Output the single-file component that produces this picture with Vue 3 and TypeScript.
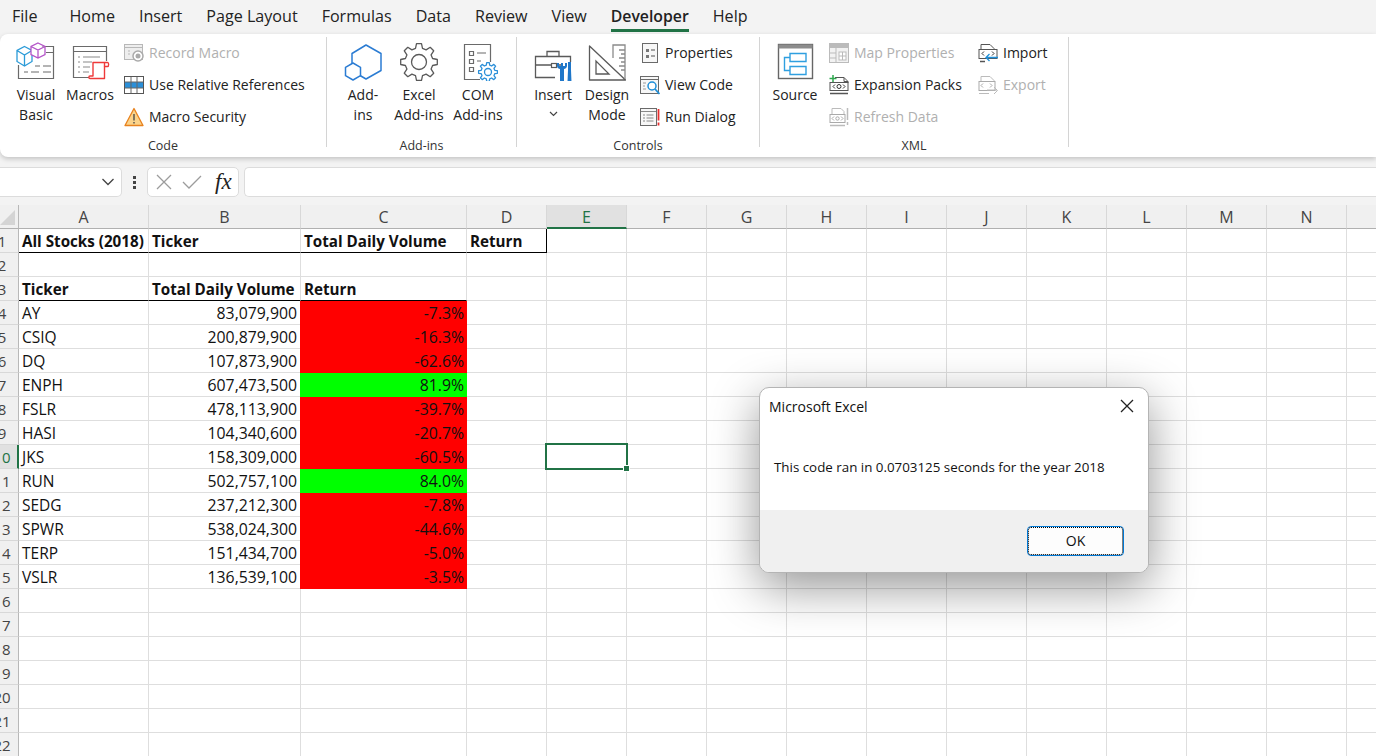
<script setup lang="ts">
interface Stock { t: string; v: string; r: string; up: boolean }

const tabs = ['Home', 'Insert', 'Page Layout', 'Formulas', 'Data', 'Review', 'View', 'Developer', 'Help']
const cols = ['A', 'B', 'C', 'D', 'E', 'F', 'G', 'H', 'I', 'J', 'K', 'L', 'M', 'N', '']

const stocks: Stock[] = [
  { t: 'AY', v: '83,079,900', r: '-7.3%', up: false },
  { t: 'CSIQ', v: '200,879,900', r: '-16.3%', up: false },
  { t: 'DQ', v: '107,873,900', r: '-62.6%', up: false },
  { t: 'ENPH', v: '607,473,500', r: '81.9%', up: true },
  { t: 'FSLR', v: '478,113,900', r: '-39.7%', up: false },
  { t: 'HASI', v: '104,340,600', r: '-20.7%', up: false },
  { t: 'JKS', v: '158,309,000', r: '-60.5%', up: false },
  { t: 'RUN', v: '502,757,100', r: '84.0%', up: true },
  { t: 'SEDG', v: '237,212,300', r: '-7.8%', up: false },
  { t: 'SPWR', v: '538,024,300', r: '-44.6%', up: false },
  { t: 'TERP', v: '151,434,700', r: '-5.0%', up: false },
  { t: 'VSLR', v: '136,539,100', r: '-3.5%', up: false },
]

const rowNums = Array.from({ length: 22 }, (_, i) => i + 1)

// 齿轮图标的路径
function gear(cx: number, cy: number, r1: number, r2: number, n: number) {
  const pts: string[] = []
  const step = (Math.PI * 2) / n
  for (let i = 0; i < n; i++) {
    const a = i * step - Math.PI / 2
    const p = (r: number, d: number) => {
      const x = cx + r * Math.cos(a + d * step)
      const y = cy + r * Math.sin(a + d * step)
      return x.toFixed(1) + ' ' + y.toFixed(1)
    }
    pts.push(p(r1, -0.32), p(r2, -0.17), p(r2, 0.17), p(r1, 0.32))
  }
  return 'M' + pts.join('L') + 'Z'
}

function cellClass(row: number, col: number) {
  const c: string[] = []
  if (row === 1 && col < 4) c.push('under')
  if (row === 1 && col === 3) c.push('edge')
  if (row === 3 && col < 3) c.push('under')
  if (col === 2 && row >= 4 && row <= 15) c.push(stocks[row - 4].up ? 'up' : 'down')
  if (row === 10 && col === 4) c.push('active')
  return c
}

function cellText(row: number, col: number) {
  if (row === 1) return ['All Stocks (2018)', 'Ticker', 'Total Daily Volume', 'Return'][col] ?? ''
  if (row === 3) return ['Ticker', 'Total Daily Volume', 'Return'][col] ?? ''
  if (row >= 4 && row <= 15) {
    const s = stocks[row - 4]
    return [s.t, s.v, s.r][col] ?? ''
  }
  return ''
}
</script>

<template>
  <div class="app">
    <div class="tabs">
      <span class="tab file">File</span>
      <span v-for="t in tabs" :key="t" class="tab" :class="{ on: t === 'Developer' }">{{ t }}</span>
    </div>

    <div class="ribbon">
      <!-- Code -->
      <div class="group" style="width: 326px">
        <div class="content pad-code">
          <div class="big" style="width: 56px">
            <svg width="40" height="40" viewBox="0 0 40 40" fill="none">
              <path d="M26 5.500h11.500v32H2.500V24" stroke="#6a6a6a" stroke-width="1.200" />
              <path d="M30 11.500h7M19 25h5M27 25h8M8 31h4M15 31h8M27 31h8" stroke="#6a6a6a" stroke-width="1.200" />
              <path d="M8.500 5.500L16 9.500v11L8.500 25 1 20.500v-11z M1 9.500l7.500 4.500 7.500-4.500M8.500 14v11" stroke="#2b9bd8" stroke-width="1.300" fill="#fff" />
              <path d="M22 2l7 3.500v8l-7 3.500-7-3.500v-8z M15 5.500L22 9l7-3.500M22 9v8" stroke="#b455c8" stroke-width="1.300" fill="#fff" />
            </svg>
            <span class="lbl">Visual<br />Basic</span>
          </div>
          <div class="big" style="width: 52px">
            <svg width="40" height="40" viewBox="0 0 40 40" fill="none">
              <path d="M19 36.500H3.500v-31h33V20" stroke="#6a6a6a" stroke-width="1.200" />
              <path d="M3.500 10.500h33" stroke="#6a6a6a" stroke-width="1.200" />
              <path d="M8 16h2M13 16h17M8 21h2M13 21h9M8 26h2M13 26h7M8 31h2M13 31h6" stroke="#8a8a8a" stroke-width="1.200" />
              <path d="M23 21.500h14.500c1.500 0 1.500 4 0 4H34.500v12H20c-1.500 0-1.500-2.500 0-2.500h3z" stroke="#ee3a3a" stroke-width="1.400" fill="#fff" stroke-linejoin="round" />
              <path d="M34.500 21.500v4" stroke="#ee3a3a" stroke-width="1.400" />
            </svg>
            <span class="lbl">Macros</span>
          </div>
          <div class="stack" style="margin-left: 8px">
            <div class="small off">
              <svg width="20" height="20" viewBox="0 0 20 20" fill="none">
                <rect x="0.500" y="1.500" width="18" height="15" fill="#eee" stroke="#b8b8b8" />
                <path d="M1 4.500h18M4 8h2M4 11h2" stroke="#b8b8b8" />
                <circle cx="14" cy="13" r="5" fill="#fff" stroke="#aaa" stroke-width="1.500" />
                <circle cx="14" cy="13" r="2.500" fill="#aaa" />
              </svg>
              Record Macro
            </div>
            <div class="small">
              <svg width="20" height="20" viewBox="0 0 20 20" fill="none">
                <rect x="0.500" y="7" width="19" height="6" fill="#2b8fd8" />
                <rect x="0.500" y="1.500" width="19" height="17" stroke="#555" />
                <path d="M7 2v16M13 2v16M1 7h18M1 13h18" stroke="#666" />
              </svg>
              Use Relative References
            </div>
            <div class="small">
              <svg width="20" height="20" viewBox="0 0 20 20" fill="none">
                <path d="M10 1.500L19 18.500H1z" fill="#fbd38a" stroke="#e8821e" stroke-width="1.300" stroke-linejoin="round" />
                <path d="M10 7v6.500M10 15v1.500" stroke="#444" stroke-width="1.300" />
              </svg>
              Macro Security
            </div>
          </div>
        </div>
        <div class="gname">Code</div>
      </div>
      <div class="sep"></div>

      <!-- Add-ins -->
      <div class="group" style="width: 189px">
        <div class="content pad-add">
          <div class="big" style="width: 56px">
            <svg width="40" height="40" viewBox="0 0 40 40" fill="none">
              <path d="M23 4l15 8.500v17L23 38l-12-7V24l-2-1V12.500z" stroke="#2b7cd3" stroke-width="1.500" stroke-linejoin="round" />
              <path d="M10 22l7.500 4.300v8.400L10 39l-7.500-4.300v-8.400z" stroke="#2b7cd3" stroke-width="1.500" fill="#fff" stroke-linejoin="round" />
            </svg>
            <span class="lbl">Add-<br />ins</span>
          </div>
          <div class="big" style="width: 56px">
            <svg width="40" height="40" viewBox="0 0 40 40" fill="none">
              <path :d="gear(20, 21, 14, 18.500, 8)" stroke="#5a5a5a" stroke-width="1.300" stroke-linejoin="round" />
              <circle cx="20" cy="21" r="7.500" stroke="#5a5a5a" stroke-width="1.300" />
            </svg>
            <span class="lbl">Excel<br />Add-ins</span>
          </div>
          <div class="big" style="width: 62px">
            <svg width="40" height="40" viewBox="0 0 40 40" fill="none">
              <path d="M22 38.500H6.500v-35h26V21" stroke="#6a6a6a" stroke-width="1.200" />
              <path d="M11.500 10.500h4v4h-4zM11.500 18.500h4v4h-4zM11.500 26.500h4v4h-4zM19 12h9M19 20h4" stroke="#6a6a6a" stroke-width="1.200" />
              <path :d="gear(30, 31, 7, 9.500, 8)" stroke="#2b8fd8" stroke-width="1.300" fill="#fff" stroke-linejoin="round" />
              <circle cx="30" cy="31" r="3.500" stroke="#2b8fd8" stroke-width="1.300" />
            </svg>
            <span class="lbl">COM<br />Add-ins</span>
          </div>
        </div>
        <div class="gname">Add-ins</div>
      </div>
      <div class="sep"></div>

      <!-- Controls -->
      <div class="group" style="width: 242px">
        <div class="content pad-ctl">
          <div class="big" style="width: 52px">
            <svg width="40" height="40" viewBox="0 0 40 40" fill="none">
              <path d="M22 36.500H2.500V15.500h35V21" stroke="#5a5a5a" stroke-width="1.300" />
              <path d="M14 15V10.500h12V15M3 24h15M24 24h4" stroke="#5a5a5a" stroke-width="1.300" />
              <rect x="18.500" y="22.500" width="5" height="4" stroke="#5a5a5a" stroke-width="1.200" />
              <path d="M24 22v3c0 2 2 3 3 3v13h4V28c1 0 3-1 3-3v-3h-2v3h-2v-3h-2v3h-2v-3z" fill="#1f77c9" />
              <path d="M35 21h3v8h-3zM35 29h3l.5 12h-4z" fill="#1f77c9" />
            </svg>
            <span class="lbl">Insert<br /><svg class="caret" width="9" height="6" viewBox="0 0 9 6" fill="none"><path d="M1 1l3.500 3.500L8 1" stroke="#444" stroke-width="1.200" /></svg></span>
          </div>
          <div class="big" style="width: 56px">
            <svg width="40" height="40" viewBox="0 0 40 40" fill="none">
              <path d="M2.500 5v34h36z" stroke="#5a5a5a" stroke-width="1.300" stroke-linejoin="round" />
              <path d="M9 20v13h13z" stroke="#5a5a5a" stroke-width="1.300" />
              <path d="M26 17V4h12v34M32 9h6M34 13h4M32 17h6M34 21h4M32 25h6M34 29h4" stroke="#8a8a8a" stroke-width="1.300" />
            </svg>
            <span class="lbl">Design<br />Mode</span>
          </div>
          <div class="stack" style="margin-left: 5px">
            <div class="small">
              <svg width="20" height="20" viewBox="0 0 20 20" fill="none">
                <rect x="2.500" y="0.500" width="15" height="19" fill="#f7f7f7" stroke="#6a6a6a" />
                <path d="M6 6h3v3H6zM6 12h3v3H6z" fill="#777" />
                <path d="M11 7h4M11 13h4" stroke="#888" stroke-width="1.500" />
              </svg>
              Properties
            </div>
            <div class="small">
              <svg width="20" height="20" viewBox="0 0 20 20" fill="none">
                <rect x="0.500" y="1.500" width="18" height="17" fill="#f7f7f7" stroke="#6a6a6a" />
                <path d="M1 4.500h18" stroke="#6a6a6a" />
                <path d="M3 8h3M3 11h2M3 14h3" stroke="#999" />
                <circle cx="12" cy="11" r="4" fill="#fff" stroke="#1f8fd8" stroke-width="1.500" />
                <path d="M15 14l4.500 5" stroke="#1f8fd8" stroke-width="1.800" />
              </svg>
              View Code
            </div>
            <div class="small">
              <svg width="20" height="20" viewBox="0 0 20 20" fill="none">
                <rect x="0.500" y="1.500" width="16" height="17" fill="#f7f7f7" stroke="#6a6a6a" />
                <path d="M1 4.500h15M3 8h2M6.500 8h7M3 11h2M6.500 11h7M3 14h2M6.500 14h7" stroke="#888" />
                <path d="M18.500 2v11.500M18.500 15.500v3" stroke="#e83030" stroke-width="1.800" />
              </svg>
              Run Dialog
            </div>
          </div>
        </div>
        <div class="gname">Controls</div>
      </div>
      <div class="sep"></div>

      <!-- XML -->
      <div class="group" style="width: 308px">
        <div class="content pad-xml">
          <div class="big" style="width: 50px">
            <svg width="40" height="40" viewBox="0 0 40 40" fill="none">
              <rect x="3.500" y="3.500" width="34" height="34" fill="#fff" stroke="#666" stroke-width="1.400" />
              <rect x="3.500" y="3.500" width="34" height="4" fill="#8c8c8c" />
              <path d="M15 12.500h16v8H15zM15 25.500h16v8H15zM15 16.500H9.500v13H15" stroke="#2f9fe0" stroke-width="1.400" />
            </svg>
            <span class="lbl">Source</span>
          </div>
          <div class="stack" style="margin-left: 9px; width: 149px">
            <div class="small off">
              <svg width="20" height="20" viewBox="0 0 20 20" fill="none">
                <rect x="0.500" y="0.500" width="19" height="19" fill="#f2f2f2" stroke="#bbb" />
                <rect x="1" y="1" width="18" height="4" fill="#bbb" />
                <path d="M7 5v14M1 10h6M1 15h6" stroke="#bbb" />
                <rect x="10" y="9" width="7" height="8" fill="#fff" stroke="#bbb" />
                <path d="M13.500 9v8M10 13h7" stroke="#bbb" />
              </svg>
              Map Properties
            </div>
            <div class="small">
              <svg width="20" height="20" viewBox="0 0 20 20" fill="none">
                <path d="M6 2.500h9l4 4V8M2 8V7" stroke="#555" />
                <path d="M15 2.500v4h4" stroke="#555" />
                <rect x="1" y="7.500" width="18" height="8" fill="#fff" stroke="#555" />
                <path d="M6 9.500L4 11.500l2 2M14 9.500l2 2-2 2" stroke="#333" />
                <circle cx="10" cy="11.500" r="2" stroke="#333" />
                <path d="M1 18.500h18" stroke="#555" stroke-width="1.500" />
                <path d="M4 0v7M.5 3.500h7" stroke="#2fa84f" stroke-width="1.500" />
              </svg>
              Expansion Packs
            </div>
            <div class="small off">
              <svg width="20" height="20" viewBox="0 0 20 20" fill="none">
                <path d="M3 7V1.500h9l3 3V7" stroke="#bbb" />
                <rect x="1" y="7.500" width="15" height="8" fill="#fff" stroke="#aaa" />
                <path d="M5 9.500l-2 2 2 2M12 9.500l2 2-2 2" stroke="#aaa" />
                <circle cx="8.500" cy="11.500" r="1.700" stroke="#aaa" />
                <path d="M1 18.500h15" stroke="#bbb" stroke-width="1.500" />
                <path d="M18.500 1v12M18.500 15v3" stroke="#bbb" stroke-width="1.500" />
              </svg>
              Refresh Data
            </div>
          </div>
          <div class="stack">
            <div class="small">
              <svg width="20" height="20" viewBox="0 0 20 20" fill="none">
                <path d="M3 7V1.500h9l4 4V7" stroke="#555" />
                <rect x="1" y="6.500" width="18" height="9" fill="#fff" stroke="#555" />
                <path d="M6 8.500l-2 2 2 2M14 8.500l2 2-2 2" stroke="#333" />
                <path d="M2 18.500h5" stroke="#555" stroke-width="1.500" />
                <path d="M20 14.500H8M11.500 11l-3.500 3.500 3.500 3.500" stroke="#1f8fd8" stroke-width="1.300" />
              </svg>
              Import
            </div>
            <div class="small off">
              <svg width="20" height="20" viewBox="0 0 20 20" fill="none">
                <path d="M3 7V1.500h9l4 4V7" stroke="#bbb" />
                <rect x="1" y="6.500" width="16" height="9" fill="#fff" stroke="#aaa" />
                <path d="M5 8.500l-2 2 2 2M12 8.500l2 2-2 2" stroke="#aaa" />
                <path d="M1 18.500h10M9 15h10M16 12l3.500 3.500-3.500 3.500" stroke="#bbb" />
              </svg>
              Export
            </div>
          </div>
        </div>
        <div class="gname">XML</div>
      </div>
      <div class="sep"></div>
    </div>

    <div class="fbar">
      <div class="namebox">
        <svg width="14" height="8" viewBox="0 0 14 8" fill="none"><path d="M1.500 1l5.500 5.500L12.500 1" stroke="#444" stroke-width="1.300" /></svg>
      </div>
      <div class="dots"><i></i><i></i><i></i></div>
      <div class="fbtns">
        <svg width="16" height="16" viewBox="0 0 16 16" fill="none"><path d="M1 1l14 14M15 1L1 15" stroke="#9c9c9c" stroke-width="1.300" /></svg>
        <svg width="20" height="16" viewBox="0 0 20 16" fill="none"><path d="M1 8l6 6L19 2" stroke="#9c9c9c" stroke-width="1.300" /></svg>
        <span class="fx">fx</span>
      </div>
      <div class="finput"></div>
    </div>

    <div class="sheet">
      <div class="corner"><div class="tri"></div></div>
      <div v-for="(c, i) in cols" :key="i" class="chead" :class="{ sel: c === 'E' }">{{ c }}</div>
      <template v-for="r in rowNums" :key="r">
        <div class="rhead" :class="{ sel: r === 10 }"><span>{{ r }}</span></div>
        <div
          v-for="(c, ci) in cols"
          :key="ci"
          class="cell"
          :class="[cellClass(r, ci), { b: r === 1 || r === 3, num: r >= 4 && r <= 15 && (ci === 1 || ci === 2) }]"
        >{{ cellText(r, ci) }}</div>
      </template>
    </div>

    <div class="dialog">
      <div class="dtitle">
        <span>Microsoft Excel</span>
        <svg width="14" height="14" viewBox="0 0 14 14" fill="none"><path d="M1 1l12 12M13 1L1 13" stroke="#222" stroke-width="1.300" /></svg>
      </div>
      <div class="dbody">This code ran in 0.0703125 seconds for the year 2018</div>
      <div class="dfoot">
        <button class="ok"><span>OK</span></button>
      </div>
    </div>
  </div>
</template>

<style>
html, body { margin: 0; padding: 0; overflow: hidden; background: #fff; }
</style>

<style scoped>
.app {
  position: relative;
  width: 1376px;
  height: 756px;
  overflow: hidden;
  background: #f3f3f3;
  font-family: "Open Sans", "Noto Sans", sans-serif;
  color: #222;
}
.tabs {
  display: flex;
  height: 34px;
  padding-left: 12px;
  gap: 24px;
  box-sizing: border-box;
}
.tab {
  font-size: 16.100px;
  line-height: 33px;
  position: relative;
}
.tab.file { margin-right: 8px; }
.tab.on { font-weight: 600; font-size: 15.800px; }
.tab.on::after {
  content: "";
  position: absolute;
  left: 0;
  right: 0;
  top: 29px;
  height: 3px;
  background: #217346;
}
.ribbon {
  display: flex;
  height: 123px;
  padding-top: 3px;
  box-sizing: border-box;
  background: #fff;
  border-radius: 8px 0 0 8px;
  box-shadow: 0 2px 5px rgba(0, 0, 0, 0.2);
  position: relative;
  z-index: 1;
}
.group { display: flex; flex-direction: column; height: 120px; }
.content { display: flex; height: 98px; }
.pad-code { padding-left: 8px; }
.pad-add { padding-left: 8px; }
.pad-ctl { padding-left: 10px; }
.pad-xml { padding-left: 10px; }
.gname {
  height: 20px;
  line-height: 22px;
  text-align: center;
  font-size: 12.500px;
  color: #333;
}
.sep { width: 1px; height: 110px; background: #d4d4d4; flex: none; }
.big {
  display: flex;
  flex-direction: column;
  align-items: center;
  padding-top: 4px;
  flex: none;
}
.big > svg { flex: none; }
.lbl {
  margin-top: 4px;
  font-size: 14px;
  line-height: 20px;
  text-align: center;
  white-space: nowrap;
}
.caret { display: inline-block; vertical-align: 3px; }
.stack { display: flex; flex-direction: column; flex: none; }
.small {
  display: flex;
  align-items: center;
  gap: 5px;
  height: 32px;
  padding-bottom: 1px;
  box-sizing: border-box;
  font-size: 14px;
  line-height: 18px;
  white-space: nowrap;
}
.small svg { flex: none; margin-top: 1px; }
.small.off { color: #b0b0b0; }

.fbar {
  display: flex;
  align-items: center;
  height: 48px;
  padding-top: 10px;
  padding-bottom: 8px;
  box-sizing: border-box;
}
.namebox {
  width: 122px;
  height: 30px;
  box-sizing: border-box;
  background: #fff;
  border: 1px solid #dcdcdc;
  border-left: none;
  border-radius: 0 5px 5px 0;
  display: flex;
  align-items: center;
  justify-content: flex-end;
  padding-right: 6px;
}
.dots {
  width: 25px;
  display: flex;
  flex-direction: column;
  align-items: center;
  gap: 2px;
}
.dots i { width: 3px; height: 3px; background: #444; display: block; }
.fbtns {
  width: 92px;
  height: 30px;
  box-sizing: border-box;
  background: #fff;
  border: 1px solid #dcdcdc;
  border-radius: 5px;
  display: flex;
  align-items: center;
  padding-left: 8px;
  gap: 10px;
}
.fx {
  font-family: "Liberation Serif", serif;
  font-style: italic;
  font-size: 23px;
  color: #222;
  margin-left: 3px;
}
.finput {
  flex: 1;
  height: 30px;
  margin-left: 5px;
  box-sizing: border-box;
  background: #fff;
  border: 1px solid #dcdcdc;
  border-right: none;
  border-radius: 5px 0 0 5px;
}

.sheet {
  display: grid;
  grid-template-columns: 19px 130px 152px 166px repeat(11, 80px) 80px;
  grid-auto-rows: 24px;
  background: #fff;
  font-size: 15.500px;
  color: #111;
}
.corner {
  background: #f0f0f0;
  border-right: 1px solid #b8b8b8;
  border-bottom: 1px solid #b0b0b0;
  box-sizing: border-box;
  position: relative;
}
.tri {
  width: 0;
  height: 0;
  border-left: 15px solid transparent;
  border-bottom: 15px solid #d4d4d4;
  margin-top: 5px;
}
.chead {
  background: #f0f0f0;
  border-right: 1px solid #d8d8d8;
  border-bottom: 1px solid #b0b0b0;
  box-sizing: border-box;
  text-align: center;
  line-height: 25px;
  font-size: 16px;
  color: #444;
}
.chead.sel {
  background: #e1e1e1;
  border-bottom: 2px solid #217346;
  color: #217346;
}
.rhead {
  background: #f0f0f0;
  border-right: 1px solid #b8b8b8;
  border-bottom: 1px solid #d8d8d8;
  box-sizing: border-box;
  line-height: 24px;
  font-size: 15px;
  color: #444;
  overflow: hidden;
  white-space: nowrap;
}
/* 行号列左边被窗口裁掉，数字中心在 x=2 附近 */
.rhead span {
  display: block;
  width: 34px;
  margin-left: -15px;
  text-align: center;
}
.rhead.sel {
  background: #e1e1e1;
  border-right: 2px solid #217346;
  color: #217346;
}
.cell {
  border-right: 1px solid #dedede;
  border-bottom: 1px solid #dedede;
  box-sizing: border-box;
  padding: 0 3px;
  line-height: 24px;
  white-space: nowrap;
  overflow: visible;
  position: relative;
}
.cell.b { font-weight: 700; font-size: 15.200px; }
.cell.num { text-align: right; padding-right: 3px; font-size: 15.800px; }
.cell.under { border-bottom: 1px solid #000; }
.cell.edge { border-right: 1px solid #000; }
.cell.down { background: #f00; border-color: #f00; box-shadow: -1px 0 0 #f00; padding-right: 2px; }
.cell.up { background: #0f0; border-color: #0f0; box-shadow: -1px 0 0 #0f0; padding-right: 2px; }
.cell.active::before {
  content: "";
  position: absolute;
  inset: -2px;
  border: 2px solid #217346;
  z-index: 1;
}
.cell.active::after {
  content: "";
  position: absolute;
  right: -4px;
  bottom: -4px;
  width: 7px;
  height: 7px;
  background: #217346;
  border: 1px solid #fff;
  box-sizing: border-box;
  z-index: 2;
}

.dialog {
  position: absolute;
  left: 759px;
  top: 387px;
  width: 390px;
  height: 186px;
  box-sizing: border-box;
  display: flex;
  flex-direction: column;
  background: #fff;
  border: 1px solid #b4b4b4;
  border-radius: 10px;
  overflow: hidden;
  box-shadow: 0 14px 48px rgba(0, 0, 0, 0.42);
  z-index: 5;
}
.dtitle {
  display: flex;
  align-items: center;
  justify-content: space-between;
  height: 36px;
  padding: 0 14px 0 9px;
  font-size: 14px;
  color: #111;
}
.dbody {
  flex: 1;
  padding: 0 14px;
  display: flex;
  align-items: center;
  font-size: 13.350px;
  color: #111;
}
.dfoot {
  height: 62px;
  background: #f0f0f0;
  display: flex;
  align-items: flex-start;
  justify-content: flex-end;
  padding-top: 16px;
  padding-right: 24px;
  box-sizing: border-box;
}
.ok {
  width: 97px;
  height: 30px;
  padding: 0;
  background: #fdfdfd;
  border: 1px solid #0078d4;
  border-radius: 4px;
  display: flex;
  align-items: stretch;
  font-family: inherit;
  font-size: 14px;
  color: #111;
}
.ok span {
  flex: 1;
  border: 1px dotted #000;
  border-radius: 3px;
  line-height: 26px;
  text-align: center;
}
</style>
